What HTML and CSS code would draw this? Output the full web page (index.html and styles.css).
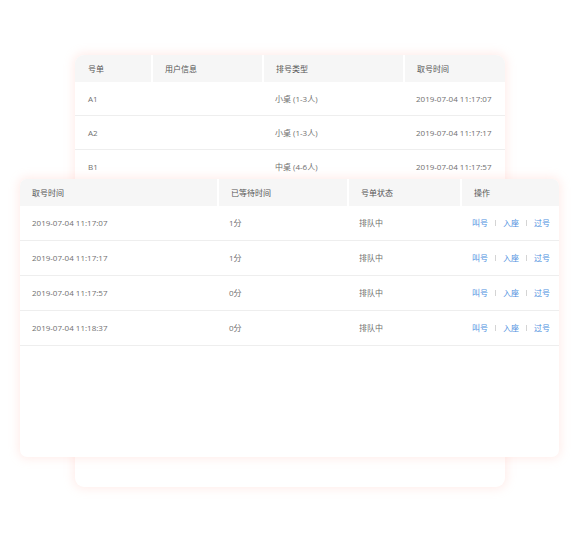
FILE: index.html
```html
<!DOCTYPE html>
<html lang="zh-CN">
<head>
<meta charset="utf-8">
<link rel="stylesheet" href="styles.css">
</head>
<body>
<div class="stage">
  <div class="card back">
    <div class="row head cols-back">
      <div class="cell">号单</div>
      <div class="cell">用户信息</div>
      <div class="cell">排号类型</div>
      <div class="cell">取号时间</div>
    </div>
    <div class="row body cols-back">
      <div class="cell">A1</div>
      <div class="cell"></div>
      <div class="cell">小桌 (1-3人)</div>
      <div class="cell">2019-07-04 11:17:07</div>
    </div>
    <div class="row body cols-back">
      <div class="cell">A2</div>
      <div class="cell"></div>
      <div class="cell">小桌 (1-3人)</div>
      <div class="cell">2019-07-04 11:17:17</div>
    </div>
    <div class="row body cols-back">
      <div class="cell">B1</div>
      <div class="cell"></div>
      <div class="cell">中桌 (4-6人)</div>
      <div class="cell">2019-07-04 11:17:57</div>
    </div>
  </div>

  <div class="card front">
    <div class="row head cols-front">
      <div class="cell">取号时间</div>
      <div class="cell">已等待时间</div>
      <div class="cell">号单状态</div>
      <div class="cell">操作</div>
    </div>
    <div class="row body tall cols-front">
      <div class="cell">2019-07-04 11:17:07</div>
      <div class="cell">1分</div>
      <div class="cell">排队中</div>
      <div class="cell actions"><a>叫号</a><span class="sep"></span><a>入座</a><span class="sep"></span><a>过号</a></div>
    </div>
    <div class="row body tall cols-front">
      <div class="cell">2019-07-04 11:17:17</div>
      <div class="cell">1分</div>
      <div class="cell">排队中</div>
      <div class="cell actions"><a>叫号</a><span class="sep"></span><a>入座</a><span class="sep"></span><a>过号</a></div>
    </div>
    <div class="row body tall cols-front">
      <div class="cell">2019-07-04 11:17:57</div>
      <div class="cell">0分</div>
      <div class="cell">排队中</div>
      <div class="cell actions"><a>叫号</a><span class="sep"></span><a>入座</a><span class="sep"></span><a>过号</a></div>
    </div>
    <div class="row body tall cols-front">
      <div class="cell">2019-07-04 11:18:37</div>
      <div class="cell">0分</div>
      <div class="cell">排队中</div>
      <div class="cell actions"><a>叫号</a><span class="sep"></span><a>入座</a><span class="sep"></span><a>过号</a></div>
    </div>
  </div>
</div>
</body>
</html>
```

FILE: styles.css
```css
html, body {
  margin: 0;
  padding: 0;
  background: #fff;
}
body {
  width: 580px;
  height: 558px;
  overflow: hidden;
  font-family: "Open Sans", "Noto Sans CJK SC", sans-serif;
  font-size: 8px;
  color: #6f6f6f;
}
.stage {
  position: relative;
  width: 580px;
  height: 558px;
  padding-top: 55px;
  box-sizing: border-box;
}
.card {
  background: #fff;
  overflow: hidden;
  box-shadow: 0 0 10px 2px rgba(255, 190, 180, 0.28);
}
.back {
  margin-left: 75px;
  width: 430px;
  height: 432px;
  border-radius: 9px;
}
.front {
  position: absolute;
  left: 20px;
  top: 179px;
  width: 539px;
  height: 278px;
  border-radius: 7px;
}
.row {
  display: grid;
  align-items: stretch;
}
.cols-back {
  grid-template-columns: 76px 111px 141px 1fr;
}
.cols-front {
  grid-template-columns: 197px 130px 113px 1fr;
}
.head {
  height: 27px;
  background: #f6f6f6;
  color: #555;
}
.head .cell + .cell {
  border-left: 2px solid #fff;
}
.body {
  height: 34px;
  border-bottom: 1px solid #eee;
  box-sizing: border-box;
}
.body.tall {
  height: 35px;
}
.cell {
  display: flex;
  align-items: center;
  padding-left: 13px;
  padding-bottom: 1px;
  white-space: nowrap;
}
.cols-front .cell {
  padding-left: 12px;
}
.head .cell + .cell {
  padding-left: 12px;
}
.actions a {
  color: #4d8fe0;
}
.actions .sep {
  width: 1px;
  height: 6px;
  background: #d4d4d4;
  margin: 0 7px;
}
```
